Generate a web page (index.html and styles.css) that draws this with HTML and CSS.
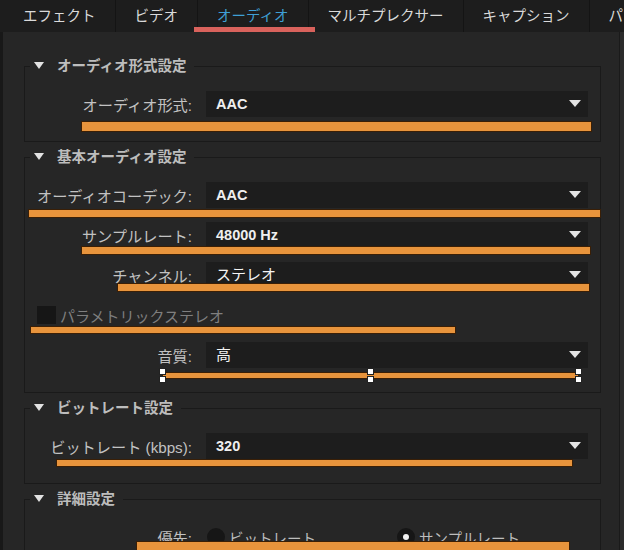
FILE: index.html
```html
<!DOCTYPE html>
<html lang="ja">
<head>
  <meta charset="UTF-8" />
  <title>書き出し設定 - オーディオ</title>
  <meta name="viewport" content="width=device-width, initial-scale=1.0"/>
  <link rel="stylesheet" href="styles.css">
</head>
<body>

  <!-- tab strip -->
  <div class="tabs">
    <div class="tab">エフェクト</div>
    <div class="tab">ビデオ</div>
    <div class="tab active">オーディオ</div>
    <div class="tab">マルチプレクサー</div>
    <div class="tab">キャプション</div>
    <div class="tab">パブリッシュ</div>
  </div>

  <div class="panel">

    <fieldset class="group">
      <legend><span class="twisty"></span>オーディオ形式設定</legend>
      <div class="row">
        <label>オーディオ形式:</label>
        <div class="select">AAC</div>
        <span class="mark mark-format"></span>
      </div>
    </fieldset>

    <fieldset class="group">
      <legend><span class="twisty"></span>基本オーディオ設定</legend>
      <div class="row">
        <label>オーディオコーデック:</label>
        <div class="select">AAC</div>
        <span class="mark mark-codec"></span>
      </div>
      <div class="row">
        <label>サンプルレート:</label>
        <div class="select">48000 Hz</div>
        <span class="mark mark-rate"></span>
      </div>
      <div class="row">
        <label>チャンネル:</label>
        <div class="select ja">ステレオ</div>
        <span class="mark mark-channel"></span>
      </div>
      <div class="row row-check">
        <div class="check">
          <span class="box"></span>
          <span>パラメトリックステレオ</span>
        </div>
        <span class="mark mark-stereo"></span>
      </div>
      <div class="row">
        <label>音質:</label>
        <div class="select ja">高</div>
        <div class="mark slider">
          <span class="knob k0"></span>
          <span class="knob k1"></span>
          <span class="knob k2"></span>
        </div>
      </div>
    </fieldset>

    <fieldset class="group">
      <legend><span class="twisty"></span>ビットレート設定</legend>
      <div class="row">
        <label>ビットレート (kbps):</label>
        <div class="select">320</div>
        <span class="mark mark-bitrate"></span>
      </div>
    </fieldset>

    <fieldset class="group">
      <legend><span class="twisty"></span>詳細設定</legend>
      <div class="row">
        <label>優先:</label>
        <div class="radios">
          <div class="radio"><span class="dot"></span>ビットレート</div>
          <div class="radio"><span class="dot on"></span>サンプルレート</div>
        </div>
        <span class="mark mark-priority"></span>
      </div>
    </fieldset>

  </div>
</body>
</html>
```

FILE: styles.css
```css
html, body {
  margin: 0;
  padding: 0;
  height: 100%;
  overflow: hidden;
  background: #2b2b2b;
  font-family: "Liberation Sans", "Noto Sans CJK JP", sans-serif;
  font-size: 14.5px;
  color: #c2c2c2;
}

/* Tabs */
.tabs {
  display: flex;
  height: 32px;
  background: #1d1d1d;
  white-space: nowrap;
  overflow: hidden;
}

.tab {
  position: relative;
  padding: 0 19px;
  line-height: 32px;
  color: #dadada;
  border-right: 1px solid #141414;
}

.tab:first-child {
  padding-left: 23px;
}

.tab.active {
  color: #3f9fd5;
}

.tab.active::after {
  content: "";
  position: absolute;
  left: -4px;
  right: -7px;
  bottom: 0;
  height: 5px;
  background: #d9625c;
}

/* Panel */
.panel {
  box-sizing: border-box;
  height: calc(100% - 32px);
  margin-right: 4px;
  padding: 26px 18px 0 21px;
  background: #262626;
  border-left: 3px solid #181818;
  border-right: 1px solid #1a1a1a;
  overflow: hidden;
}

.group {
  min-width: 0;
  margin: 0 0 7px;
  padding: 17px 12px 24px 5px;
  border: 1px solid #1a1a1a;
}

.group legend {
  padding: 0 8px 0 4px;
  line-height: 16px;
  font-weight: bold;
  color: #bdbdbd;
}

.twisty {
  display: inline-block;
  vertical-align: middle;
  width: 0;
  height: 0;
  margin: -3px 13px 0 0;
  border-left: 5px solid transparent;
  border-right: 5px solid transparent;
  border-top: 7px solid #e2e2e2;
}

/* Rows */
.row {
  position: relative;
  display: grid;
  grid-template-columns: 162px 1fr;
  column-gap: 14px;
  align-items: center;
  height: 26px;
}

.row + .row {
  margin-top: 14px;
}

.row label {
  text-align: right;
  white-space: nowrap;
  font-size: 15.2px;
}

.select {
  position: relative;
  height: 26px;
  line-height: 26px;
  padding-left: 10px;
  background: #1d1d1d;
  color: #efefef;
  font-weight: bold;
}

.select.ja {
  font-weight: normal;
  color: #f4f4f4;
  font-size: 15px;
}

.select::after {
  content: "";
  position: absolute;
  right: 7px;
  top: 9px;
  border-left: 6px solid transparent;
  border-right: 6px solid transparent;
  border-top: 7px solid #e4e4e4;
}

.row-check {
  display: flex;
}

.check {
  display: flex;
  align-items: center;
  gap: 4px;
  margin-left: 7px;
  color: #7f7f7f;
  font-size: 15px;
}

.check .box {
  width: 19px;
  height: 18px;
  background: #161616;
}

.radios {
  display: grid;
  grid-template-columns: 190px 190px;
  padding-left: 1px;
}

.radio {
  display: flex;
  align-items: center;
  gap: 4px;
  color: #bdbdbd;
}

.dot {
  position: relative;
  width: 18px;
  height: 18px;
  border-radius: 50%;
  background: #161616;
}

.dot.on::after {
  content: "";
  position: absolute;
  left: 6px;
  top: 6px;
  width: 6px;
  height: 6px;
  border-radius: 50%;
  background: #f2f2f2;
}

/* Orange markers drawn over the form */
.mark {
  position: absolute;
  height: 7px;
  background: #e8943c;
  box-shadow: 0 0 0 1px #3a1f06;
}

.mark-format   { left: 52px;  top: 31px; width: 509px; height: 9px; }
.mark-codec    { left: -1px;  top: 28px; width: 571px; }
.mark-rate     { left: 52px;  top: 25px; width: 508px; }
.mark-channel  { left: 88px;  top: 22px; width: 471px; }
.mark-stereo   { left: 1px;   top: 25px; width: 424px; height: 6px; }
.mark-bitrate  { left: 27px;  top: 27px; width: 515px; height: 6px; }
.mark-priority { left: 107px; top: 18px; width: 432px; height: 8px; }

.slider {
  left: 133px;
  top: 31px;
  width: 415px;
  height: 5px;
}

.knob {
  position: absolute;
  top: -4px;
  width: 5px;
  height: 13px;
}

.knob::before,
.knob::after {
  content: "";
  position: absolute;
  left: 0;
  width: 5px;
  height: 5px;
  background: #fff;
  box-shadow: 0 0 0 1px #222;
}

.knob::before { top: 0; }
.knob::after { bottom: 0; }

.k0 { left: -3px; }
.k1 { left: 205px; }
.k2 { left: 413px; }
```
